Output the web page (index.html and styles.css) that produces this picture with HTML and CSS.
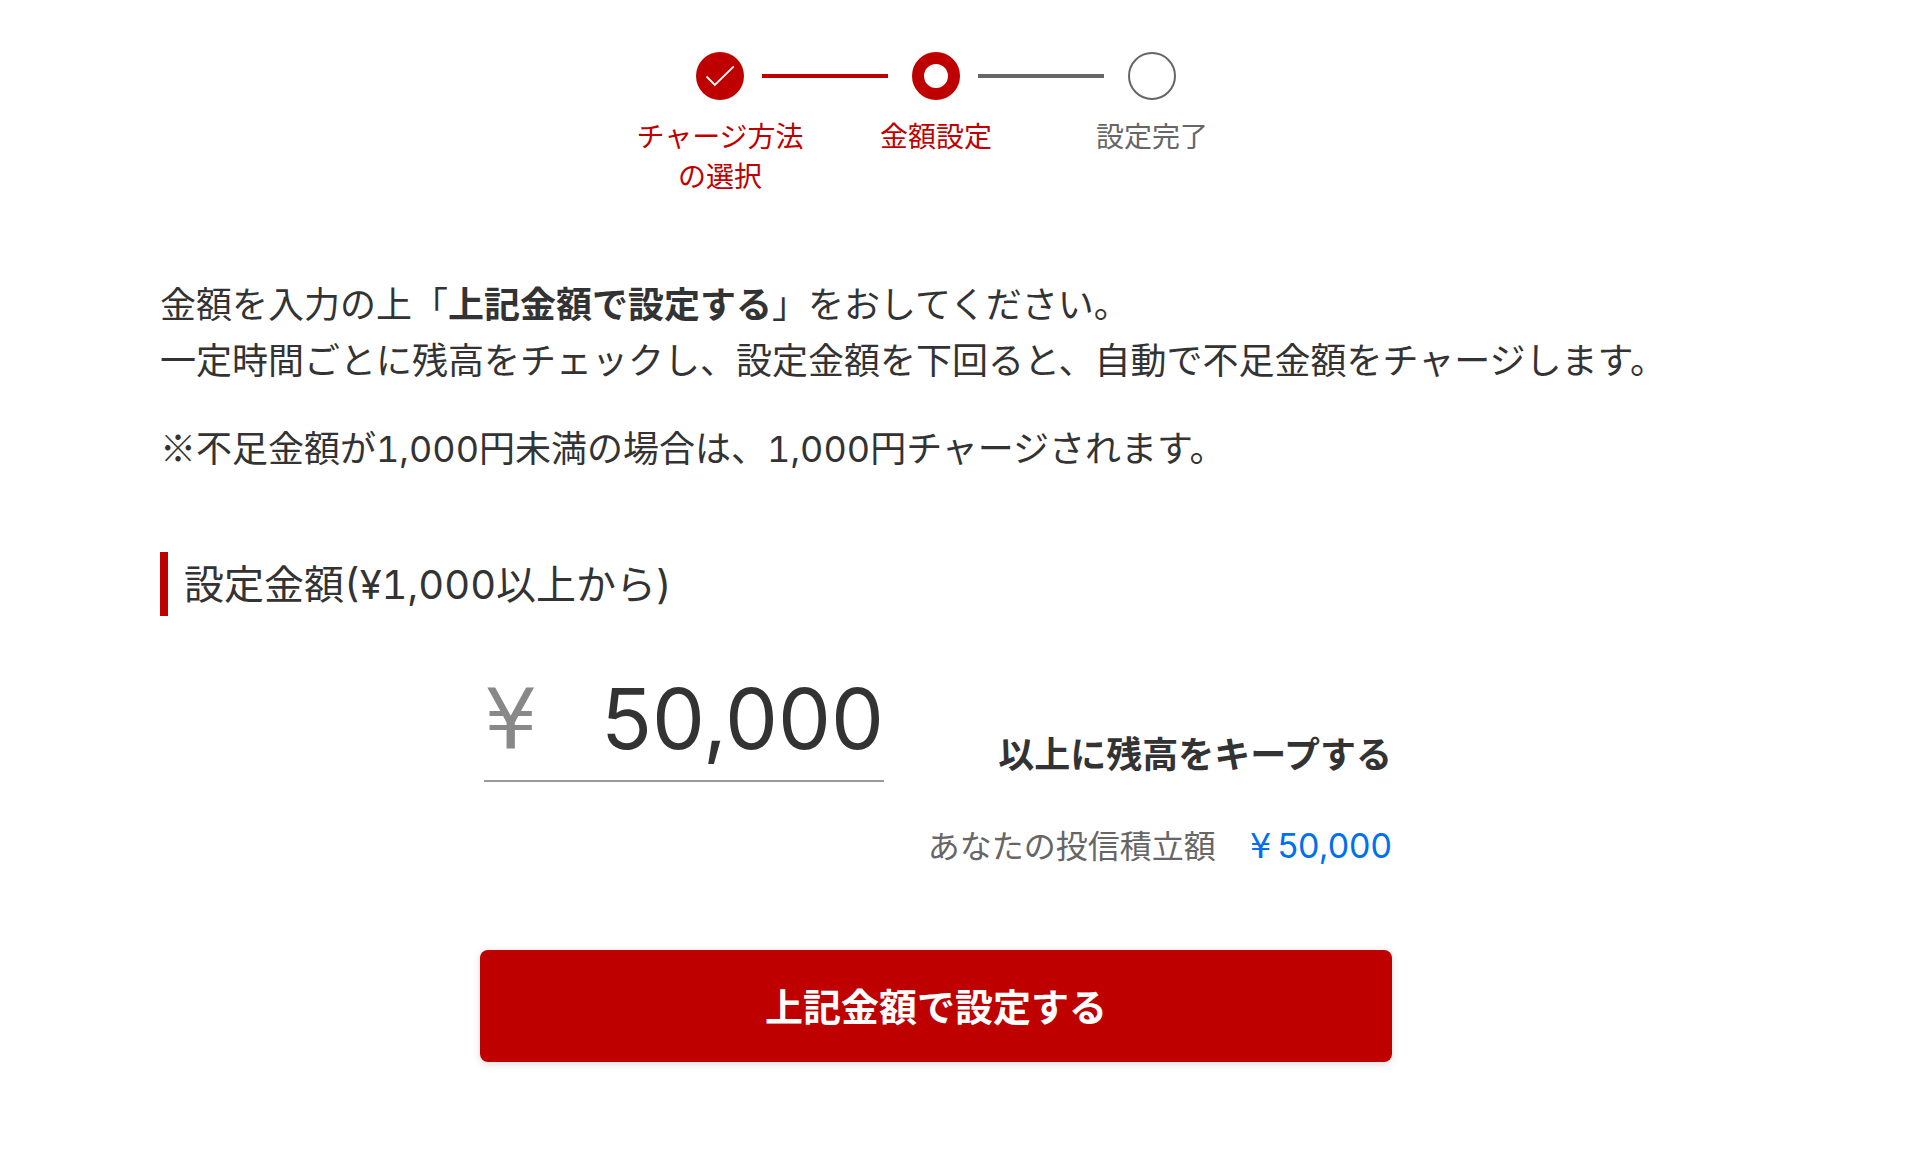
FILE: index.html
```html
<!DOCTYPE html>
<html lang="ja">
<head>
<meta charset="utf-8">
<meta name="viewport" content="width=device-width, initial-scale=1">
<title>金額設定</title>
<link rel="stylesheet" href="styles.css">
</head>
<body>
<main class="page">
  <ol class="steps">
    <li class="step step-done">
      <div class="step-track">
        <svg class="step-icon" viewBox="0 0 48 48" aria-hidden="true">
          <circle cx="24" cy="24" r="24" fill="#bf0000"/>
          <path d="M10.5 24.5l8.3 8.5 19-18.7" fill="none" stroke="#fff" stroke-width="1.8"/>
        </svg>
      </div>
      <span class="step-label">チャージ方法<br>の選択</span>
    </li>
    <li class="step step-current" aria-current="step">
      <div class="step-track">
        <svg class="step-icon" viewBox="0 0 48 48" aria-hidden="true">
          <circle cx="24" cy="24" r="18" fill="none" stroke="#bf0000" stroke-width="12"/>
        </svg>
      </div>
      <span class="step-label">金額設定</span>
    </li>
    <li class="step">
      <div class="step-track">
        <svg class="step-icon" viewBox="0 0 48 48" aria-hidden="true">
          <circle cx="24" cy="24" r="23" fill="none" stroke="#666" stroke-width="2"/>
        </svg>
      </div>
      <span class="step-label">設定完了</span>
    </li>
  </ol>

  <p class="lead">金額を入力の上「<strong>上記金額で設定する</strong>」をおしてください。<br>一定時間ごとに残高をチェックし、設定金額を下回ると、自動で不足金額をチャージします。</p>
  <p class="lead">※不足金額が<span class="num">1,000</span>円未満の場合は、<span class="num">1,000</span>円チャージされます。</p>

  <h2 class="heading"><label for="amount">設定金額<span class="num">(¥1,000</span>以上から<span class="num">)</span></label></h2>

  <form class="form">
    <div class="amount-row">
      <div class="amount-field">
        <span class="amount-yen">¥</span>
        <input class="amount-input" id="amount" type="text" inputmode="numeric" value="50,000">
      </div>
      <span class="amount-note">以上に残高をキープする</span>
    </div>
    <div class="plan-row">
      <span>あなたの投信積立額</span>
      <a class="plan-link" href="#amount"><span class="plan-yen">¥</span><span>50,000</span></a>
    </div>
    <button class="submit" type="submit">上記金額で設定する</button>
  </form>
</main>
</body>
</html>
```
FILE: styles.css
```css
* {
  box-sizing: border-box;
}

body {
  margin: 0;
  background: #fff;
  color: #333;
  font-family: "Noto Sans CJK JP", sans-serif;
  font-size: 36px;
  line-height: 56px;
}

.page {
  padding: 52px 206px 80px 160px;
}

/* Progress steps */
.steps {
  display: flex;
  justify-content: center;
  margin: 0 0 79px;
  padding: 0;
  list-style: none;
}

.step {
  width: 216px;
  color: #666;
  font-size: 28px;
  line-height: 40px;
  text-align: center;
}

.step-done,
.step-current {
  color: #bf0000;
}

.step-track {
  display: flex;
  align-items: center;
  margin-bottom: 15px;
}

.step-track::before,
.step-track::after {
  content: "";
  height: 4px;
  background: #666;
}

.step-track::before {
  width: 60px;
  margin-right: 24px;
}

.step-track::after {
  width: 66px;
  margin-left: 18px;
}

.step-done .step-track::after,
.step-current .step-track::before {
  background: #bf0000;
}

.step:first-child .step-track::before,
.step:last-child .step-track::after {
  background: none;
}

.step-icon {
  width: 48px;
  height: 48px;
}

.step-label {
  display: block;
}

/* Explanation */
.lead {
  margin: 0 0 32px;
}

.num {
  font-family: Inter, sans-serif;
  font-variant-numeric: tabular-nums;
  line-height: 1;
}

.heading {
  margin: 78px 0 44px;
  padding: 0 0 4px 16px;
  border-left: 8px solid #bf0000;
  font-size: 40px;
  font-weight: 400;
  line-height: 60px;
}

/* Amount form */
.form {
  max-width: 912px;
  margin: 0 auto;
}

.amount-row {
  display: flex;
  justify-content: space-between;
  align-items: flex-end;
  padding-left: 4px;
}

.amount-field {
  display: flex;
  align-items: baseline;
  width: 400px;
  height: 122px;
  border-bottom: 2px solid #999;
}

.amount-yen {
  color: #888;
  font-family: "DejaVu Sans", sans-serif;
  font-size: 84px;
  line-height: 1;
}

.amount-input {
  flex: 1;
  min-width: 0;
  height: 120px;
  padding: 0 0 4px;
  border: 0;
  outline: 0;
  background: none;
  color: #333;
  font-family: Inter, sans-serif;
  font-size: 84px;
  text-align: right;
}

.amount-note {
  padding-bottom: 2px;
  font-weight: 700;
}

.plan-row {
  display: flex;
  justify-content: flex-end;
  align-items: baseline;
  gap: 34px;
  margin: 34px 0 76px;
  color: #666;
  font-size: 32px;
}

.plan-link {
  display: flex;
  align-items: baseline;
  gap: 6px;
  color: #0070f0;
  font-family: Inter, sans-serif;
  font-size: 34px;
  text-decoration: none;
}

.plan-yen {
  font-family: "DejaVu Sans", sans-serif;
}

.submit {
  display: block;
  width: 100%;
  height: 112px;
  padding: 0 0 4px;
  border: 0;
  border-radius: 8px;
  background: #bf0000;
  box-shadow: 0 2px 8px rgba(0, 0, 0, 0.15);
  color: #fff;
  font-family: inherit;
  font-size: 38px;
  font-weight: 700;
}
```
